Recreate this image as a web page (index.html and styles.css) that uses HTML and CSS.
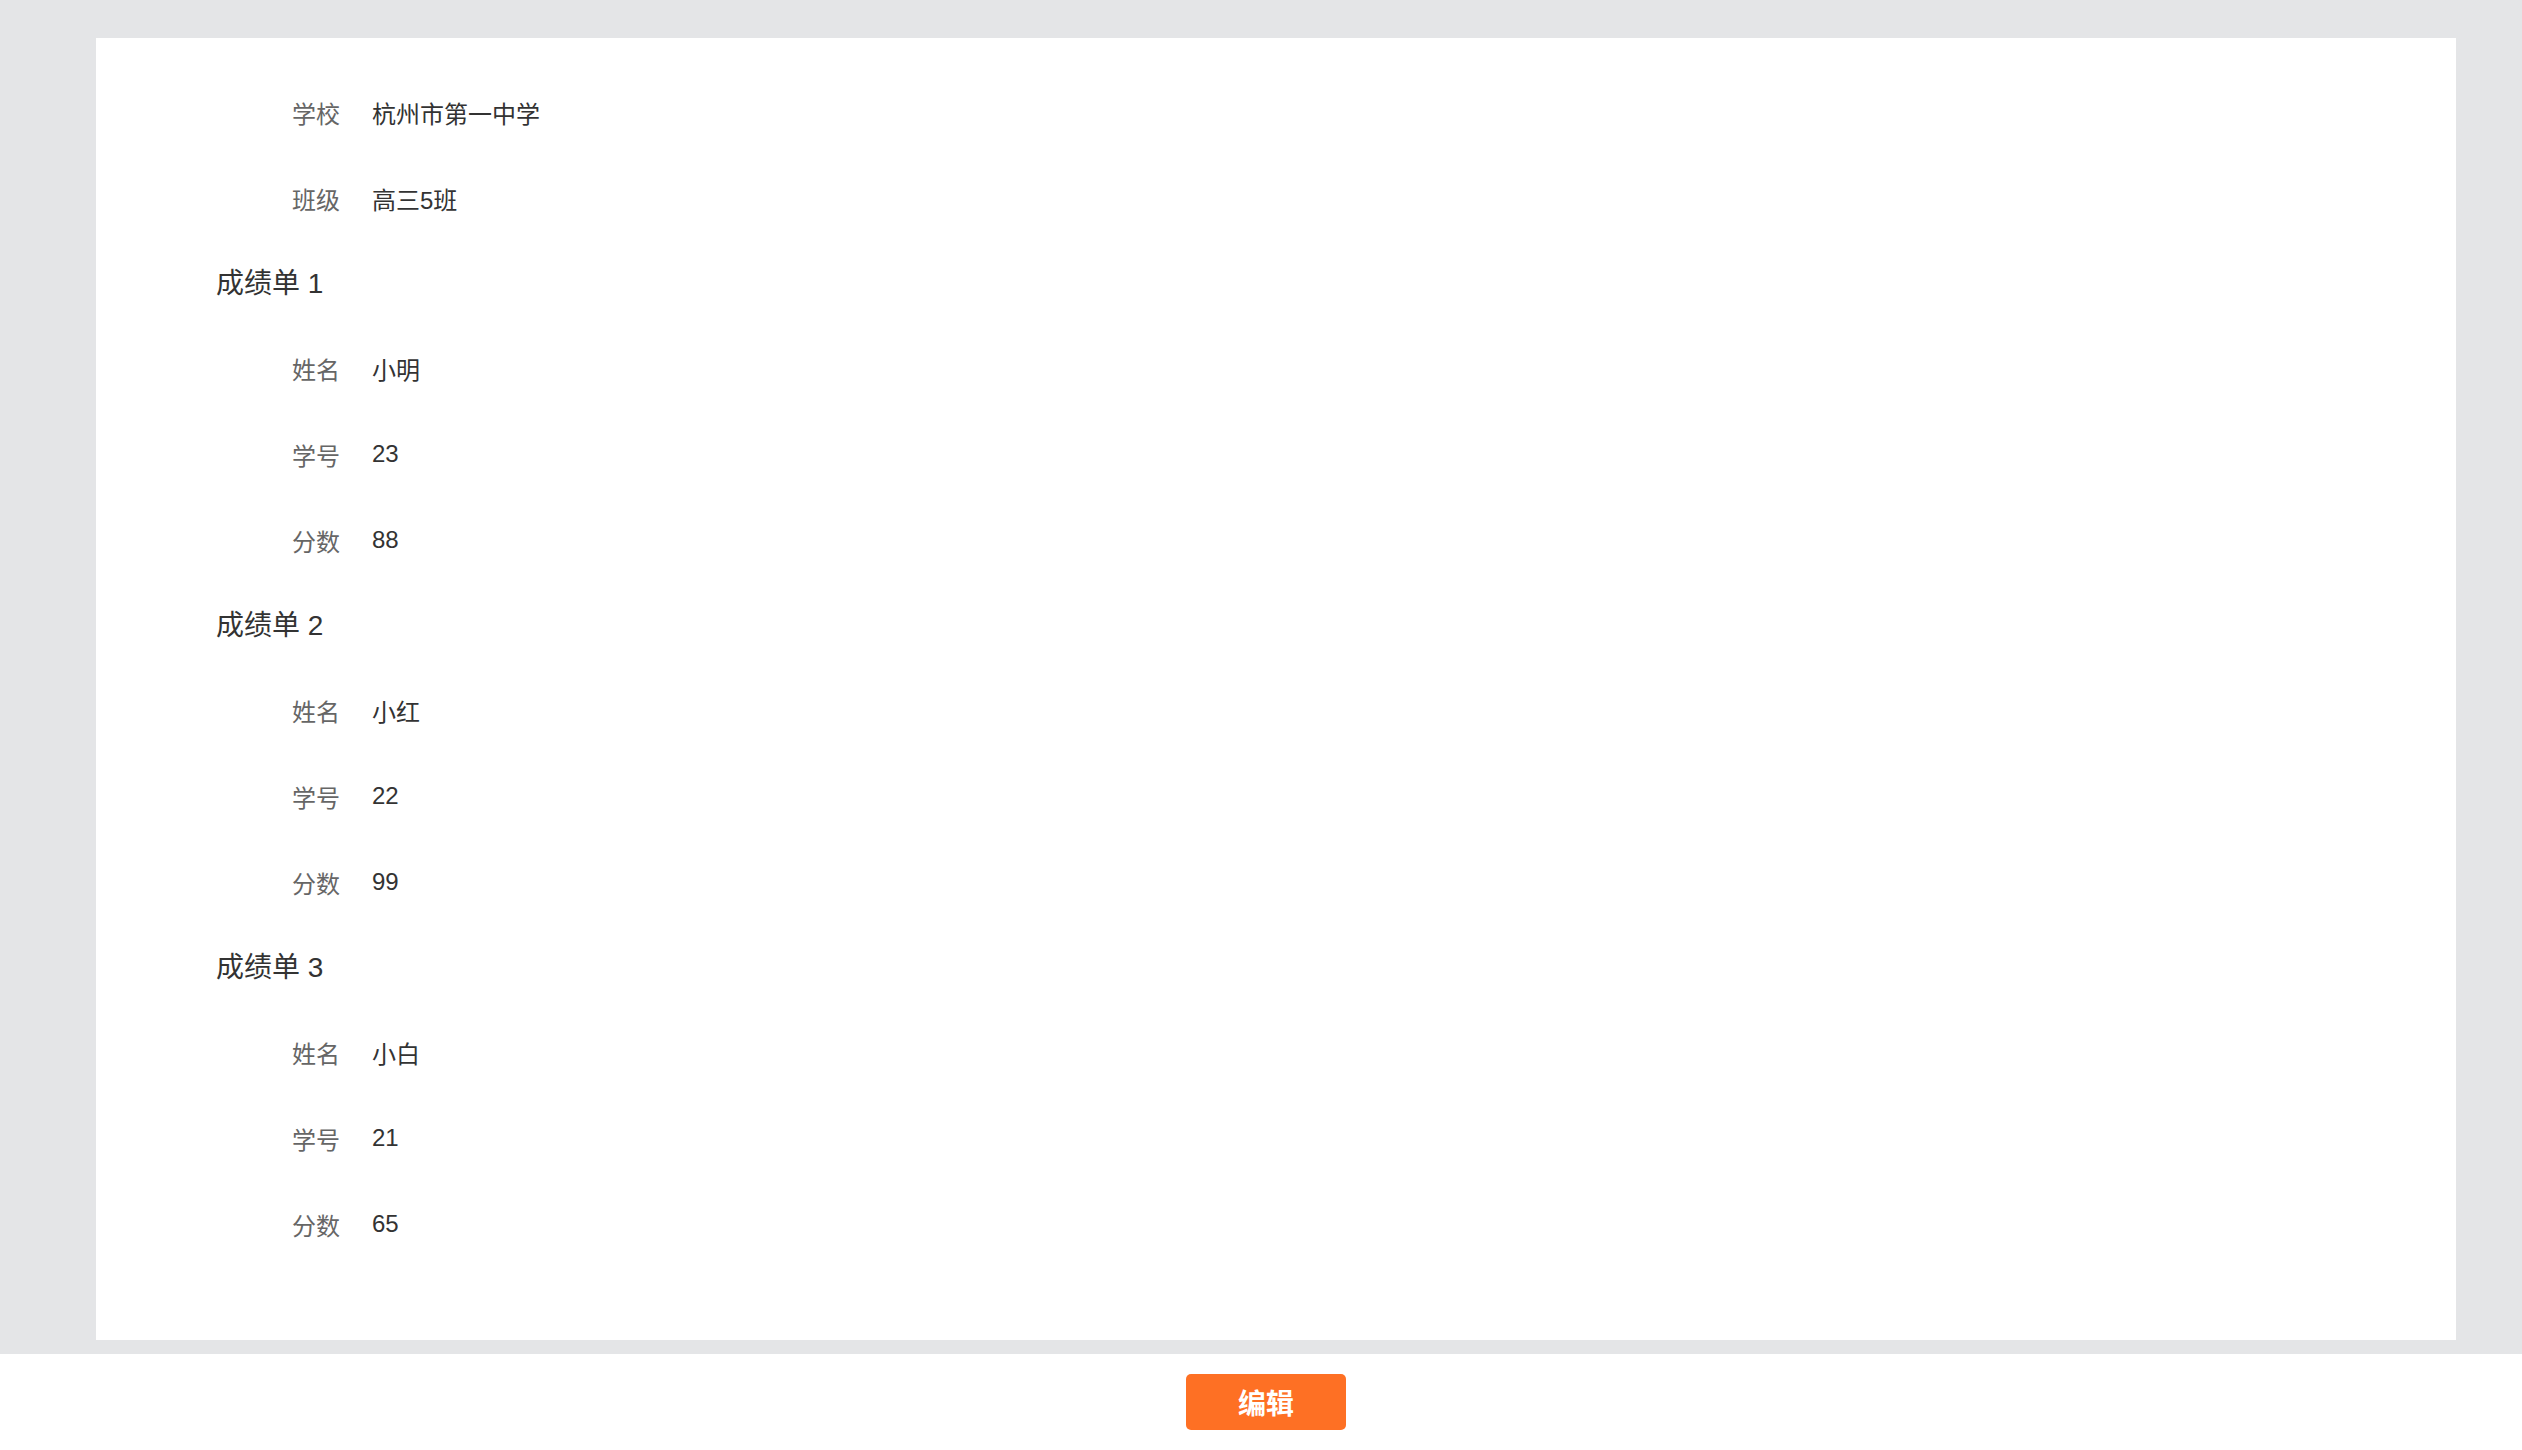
FILE: index.html
```html
<!DOCTYPE html>
<html lang="zh-CN">
<head>
<meta charset="utf-8">
<title>成绩单</title>
<link rel="stylesheet" href="styles.css">
</head>
<body>
<main class="page">
  <section class="card">
    <div class="row"><span class="label">学校</span><span class="value">杭州市第一中学</span></div>
    <div class="row"><span class="label">班级</span><span class="value">高三5班</span></div>

    <h2 class="heading">成绩单 1</h2>
    <div class="row"><span class="label">姓名</span><span class="value">小明</span></div>
    <div class="row"><span class="label">学号</span><span class="value">23</span></div>
    <div class="row"><span class="label">分数</span><span class="value">88</span></div>

    <h2 class="heading">成绩单 2</h2>
    <div class="row"><span class="label">姓名</span><span class="value">小红</span></div>
    <div class="row"><span class="label">学号</span><span class="value">22</span></div>
    <div class="row"><span class="label">分数</span><span class="value">99</span></div>

    <h2 class="heading">成绩单 3</h2>
    <div class="row"><span class="label">姓名</span><span class="value">小白</span></div>
    <div class="row"><span class="label">学号</span><span class="value">21</span></div>
    <div class="row"><span class="label">分数</span><span class="value">65</span></div>
  </section>
</main>
<footer class="footer">
  <button class="btn-edit" type="button">编辑</button>
</footer>
</body>
</html>
```
FILE: styles.css
```css
html, body {
  margin: 0;
  padding: 0;
}
body {
  background: #e4e5e7;
  font-family: "Liberation Sans", "Noto Sans CJK SC", sans-serif;
  height: 1450px;
  display: flex;
  flex-direction: column;
  overflow: hidden;
}
.page {
  padding: 38px 66px 14px 96px;
}
.card {
  background: #ffffff;
  padding: 31px 0 73px 120px;
}
.row {
  height: 86px;
  display: flex;
  align-items: center;
  font-size: 24px;
}
.label {
  width: 124px;
  text-align: right;
  color: #666666;
  margin-right: 32px;
}
.value {
  color: #333333;
}
.heading {
  margin: 0;
  height: 84px;
  padding-bottom: 4px;
  box-sizing: border-box;
  display: flex;
  align-items: center;
  font-size: 28px;
  font-weight: normal;
  color: #333333;
}
.footer {
  background: #ffffff;
  height: 96px;
  display: flex;
  align-items: center;
  justify-content: center;
  padding-left: 10px;
}
.btn-edit {
  width: 160px;
  height: 56px;
  border: none;
  border-radius: 5px;
  background: #fe7024;
  color: #ffffff;
  font-family: "Liberation Sans", "Noto Sans CJK SC", sans-serif;
  font-size: 28px;
  font-weight: bold;
  padding: 0;
}
```
